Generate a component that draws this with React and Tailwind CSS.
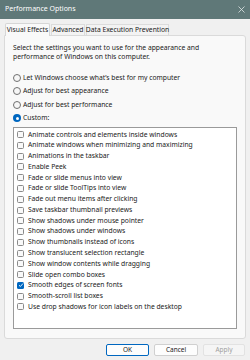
import React from 'react';

const effects = [
  ['Animate controls and elements inside windows', false],
  ['Animate windows when minimizing and maximizing', false],
  ['Animations in the taskbar', false],
  ['Enable Peek', false],
  ['Fade or slide menus into view', false],
  ['Fade or slide ToolTips into view', false],
  ['Fade out menu items after clicking', false],
  ['Save taskbar thumbnail previews', false],
  ['Show shadows under mouse pointer', false],
  ['Show shadows under windows', false],
  ['Show thumbnails instead of icons', false],
  ['Show translucent selection rectangle', false],
  ['Show window contents while dragging', false],
  ['Slide open combo boxes', false],
  ['Smooth edges of screen fonts', true],
  ['Smooth-scroll list boxes', false],
  ['Use drop shadows for icon labels on the desktop', false],
];

const choices = [
  ['Let Windows choose what\u2019s best for my computer', false],
  ['Adjust for best appearance', false],
  ['Adjust for best performance', false],
  ['Custom:', true],
];

function Radio({ on }) {
  return on ? (
    <span className="w-[8px] h-[8px] rounded-full bg-[#0067c0] flex items-center justify-center shrink-0">
      <span className="w-[3px] h-[3px] rounded-full bg-white" />
    </span>
  ) : (
    <span className="w-[8px] h-[8px] rounded-full border border-[#707070] bg-[#f7f7f7] shrink-0" />
  );
}

function Check({ on }) {
  return on ? (
    <span className="w-[7px] h-[7px] rounded-[1.5px] bg-[#0067c0] flex items-center justify-center shrink-0">
      <svg width="6" height="6" viewBox="0 0 6 6">
        <path d="M1 3.2 L2.4 4.5 L5 1.5" fill="none" stroke="white" strokeWidth="0.9" />
      </svg>
    </span>
  ) : (
    <span className="w-[7px] h-[7px] rounded-[1.5px] border border-[#8a8a8a] bg-[#f9f9f9] shrink-0" />
  );
}

export default function App() {
  return (
    <div className="w-[250px] h-[360px] bg-[#f0f0f0] flex flex-col text-[6.75px] text-[#1a1a1a] overflow-hidden whitespace-nowrap" style={{ fontFamily: '"Noto Sans", sans-serif' }}>
      <div className="h-[19px] bg-[#5f7878] flex items-center justify-between pl-[5px] pr-[5px] text-white shrink-0">
        <span className="text-[7px]">Performance Options</span>
        <svg width="7" height="7" viewBox="0 0 7 7">
          <path d="M0.5 0.5 L6.5 6.5 M6.5 0.5 L0.5 6.5" stroke="#e0e6e6" strokeWidth="0.8" />
        </svg>
      </div>

      <div className="flex items-end pl-[5px] pt-[4px] h-[16px] shrink-0">
        <div className="h-[13px] w-[45px] bg-[#f9f9f9] border border-b-0 border-[#d6d6d6] rounded-t-[2px] flex items-center justify-center relative z-10 -mb-px">
          Visual Effects
        </div>
        <div className="h-[11px] w-[34px] border border-b-0 border-[#dcdcdc] bg-[#f3f3f3] flex items-center justify-center ml-[1px]">
          Advanced
        </div>
        <div className="h-[11px] w-[83px] border border-b-0 border-[#dcdcdc] bg-[#f3f3f3] flex items-center justify-center ml-[1px]">
          Data Execution Prevention
        </div>
      </div>

      <div className="mx-[4px] h-[304px] bg-[#f9f9f9] border border-[#dadada] rounded-b-[3px] rounded-tr-[3px] flex flex-col px-[8px] pt-[6.5px] shrink-0">
        <p className="leading-[9.7px]">
          Select the settings you want to use for the appearance and
          <br />
          performance of Windows on this computer.
        </p>
        <div className="flex flex-col mt-[9px]">
          {choices.map(([label, on]) => (
            <div key={label} className="flex items-center gap-[2px] h-[13.6px]">
              <Radio on={on} />
              <span>{label}</span>
            </div>
          ))}
        </div>
        <div className="mt-[2px] h-[202px] bg-white border border-[#9a9a9a] pt-[1px] pl-[3px] flex flex-col">
          {effects.map(([label, on]) => (
            <div key={label} className="flex items-center gap-[4px] h-[10.77px]">
              <Check on={on} />
              <span>{label}</span>
            </div>
          ))}
        </div>
      </div>

      <div className="flex justify-end gap-[5px] pr-[5px] mt-[5px]">
        <button className="w-[43px] h-[12px] bg-[#fdfdfd] border border-[#0067c0] rounded-[2px] text-[6.5px] flex items-center justify-center">OK</button>
        <button className="w-[44px] h-[12px] bg-[#fdfdfd] border border-[#d0d0d0] rounded-[2px] text-[6.5px] flex items-center justify-center">Cancel</button>
        <button className="w-[42px] h-[12px] bg-[#f5f5f5] border border-[#e2e2e2] rounded-[2px] text-[6.5px] text-[#a0a0a0] flex items-center justify-center">Apply</button>
      </div>
    </div>
  );
}
